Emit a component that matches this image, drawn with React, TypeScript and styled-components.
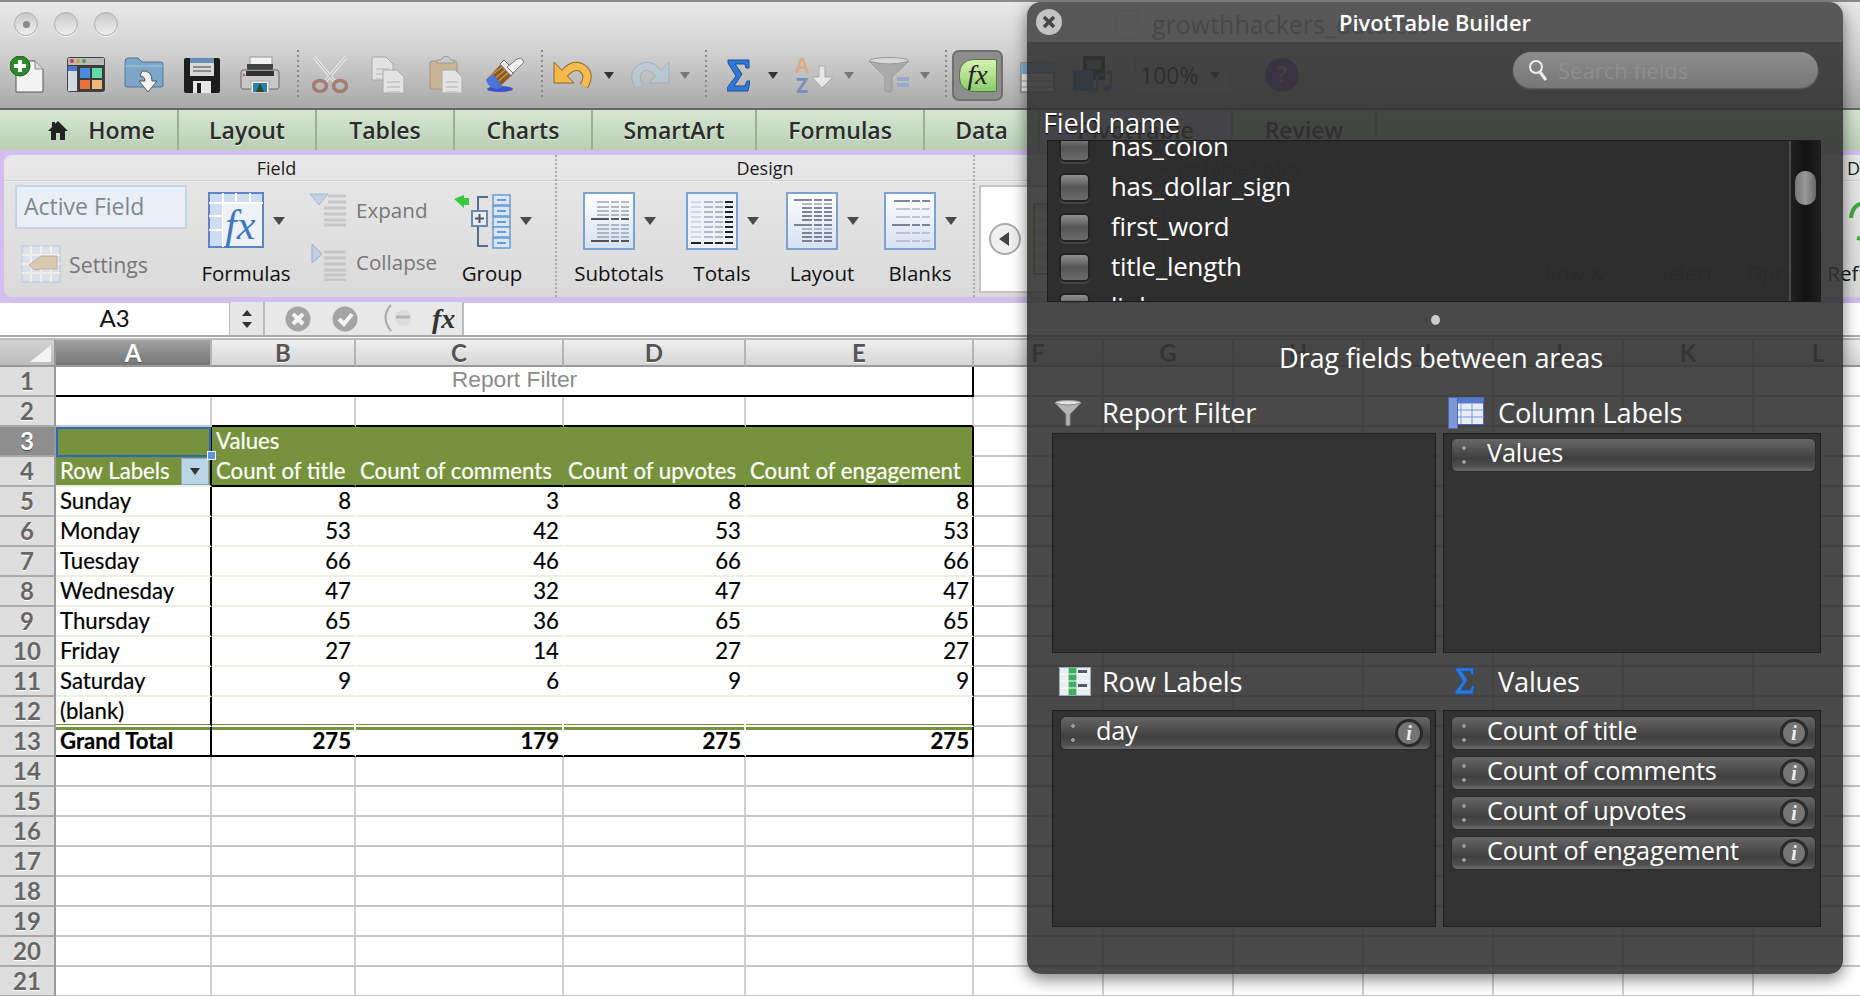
import React from 'react';
import styled, { createGlobalStyle } from 'styled-components';

const GlobalStyle = createGlobalStyle`
  html, body { margin: 0; padding: 0; background: #fff; }
  * { box-sizing: border-box; }
`;

const UI = '"Open Sans", "Liberation Sans", sans-serif';
const CELL = 'Lato, "Open Sans", sans-serif';
const GREEN = '#76923c';

/* ---------- toolbar icons ---------- */

const NewDocIcon = () => (
  <svg width="34" height="38" viewBox="0 0 34 38">
    <path d="M6 5H25L33 13V36H6Z" fill="#f4f4f4" stroke="#555" strokeWidth="1" />
    <path d="M25 5V13H33" fill="#ddd" stroke="#888" />
    <circle cx="10" cy="10" r="10" fill="#2c8a2c" stroke="#175c17" />
    <path d="M10 4V16M4 10H16" stroke="#fff" strokeWidth="4" />
  </svg>
);

const GalleryIcon = () => (
  <svg width="38" height="36" viewBox="0 0 38 36">
    <rect x="0.5" y="0.5" width="37" height="34" rx="2" fill="#3c3c3c" stroke="#444" />
    <rect x="1" y="1" width="36" height="7" fill="#b9b9b9" />
    <circle cx="5" cy="4" r="2" fill="#d63c30" />
    <circle cx="11" cy="4" r="2" fill="#d89a2c" />
    <circle cx="17" cy="4" r="2" fill="#4c9a3a" />
    <rect x="1" y="9" width="9" height="25" fill="#d5dae2" />
    <rect x="1" y="9" width="9" height="5" fill="#4a78d0" />
    <rect x="13" y="11" width="10" height="10" fill="#4c8ae0" />
    <rect x="25" y="11" width="10" height="10" fill="#5fdca8" />
    <rect x="13" y="23" width="10" height="9" fill="#e8703c" />
    <rect x="25" y="23" width="10" height="9" fill="#f0b878" />
  </svg>
);

const OpenIcon = () => (
  <svg width="40" height="38" viewBox="0 0 40 38">
    <path d="M1 6Q1 2 4 2H14L18 6H37Q39 6 39 9V29Q39 31 37 31H3Q1 31 1 29Z" fill="#7ea6c8" stroke="#4e7698" />
    <path d="M1 10H39" stroke="#a8c6de" />
    <path d="M18 15Q28 14 28 25H33L24 36L15 25H21Q21 20 16 20Z" fill="#f4f4f4" stroke="#555" />
  </svg>
);

const SaveIcon = () => (
  <svg width="36" height="37" viewBox="0 0 36 37">
    <path d="M2 1H34Q36 1 36 3V34Q36 36 34 36H2Q0 36 0 34V3Q0 1 2 1Z" fill="#1d1d1d" />
    <rect x="6" y="1" width="24" height="18" fill="#d8d8d8" />
    <rect x="6" y="1" width="24" height="5" fill="#6c8cb8" />
    <path d="M9 10H27M9 14H27" stroke="#8a8a8a" strokeWidth="2" />
    <rect x="9" y="24" width="18" height="12" fill="#e6e6e6" />
    <rect x="13" y="26" width="4" height="10" fill="#1d1d1d" />
  </svg>
);

const PrintIcon = () => (
  <svg width="40" height="38" viewBox="0 0 40 38">
    <rect x="10" y="1" width="22" height="12" fill="#f2f2f2" stroke="#999" />
    <rect x="7" y="8" width="26" height="10" fill="#444" />
    <path d="M3 14H37Q39 14 39 17V31Q39 33 37 33H3Q1 33 1 31V17Q1 14 3 14Z" fill="#c8c8c8" stroke="#666" />
    <rect x="6" y="15" width="28" height="5" fill="#333" />
    <circle cx="4" cy="19" r="1.2" fill="#d44" />
    <rect x="11" y="25" width="18" height="12" fill="#eee" stroke="#aaa" />
    <rect x="13" y="27" width="14" height="9" fill="#2f7fa8" />
    <path d="M20 27L24 36H16Z" fill="#1d4f2e" />
  </svg>
);

const ScissorsIcon = () => (
  <svg width="36" height="38" viewBox="0 0 36 38" opacity="0.75">
    <path d="M2 1L24 27M34 1L12 27" stroke="#f0f0f0" strokeWidth="3.5" />
    <path d="M2 1L24 27M34 1L12 27" stroke="#a8a8a8" strokeWidth="1" />
    <ellipse cx="8" cy="30" rx="6.5" ry="5.5" fill="none" stroke="#a0675a" strokeWidth="3.5" />
    <ellipse cx="28" cy="30" rx="6.5" ry="5.5" fill="none" stroke="#a0675a" strokeWidth="3.5" />
  </svg>
);

const SheetShape = ({ x, y, w, h }: { x: number; y: number; w: number; h: number }) => (
  <g>
    <path d={`M${x} ${y}H${x + w - 7}L${x + w} ${y + 7}V${y + h}H${x}Z`} fill="#e3e3e3" stroke="#aaa" />
    <path d={`M${x + 4} ${y + 12}H${x + w - 4}M${x + 4} ${y + 17}H${x + w - 4}M${x + 4} ${y + 22}H${x + w - 4}`} stroke="#c4c4c4" strokeWidth="1.5" />
  </g>
);

const CopyIcon = () => (
  <svg width="34" height="38" viewBox="0 0 34 38">
    <SheetShape x={1} y={1} w={21} h={23} />
    <SheetShape x={12} y={14} w={21} h={23} />
  </svg>
);

const PasteIcon = () => (
  <svg width="34" height="38" viewBox="0 0 34 38">
    <rect x="1" y="5" width="27" height="28" rx="2" fill="#c9b596" stroke="#a4947c" />
    <path d="M8 7V4H12Q14 0 17 0T22 4H25V7Z" fill="#c8c8c8" stroke="#999" />
    <SheetShape x={13} y={14} w={20} h={23} />
  </svg>
);

const BrushIcon = () => (
  <svg width="39" height="38" viewBox="0 0 39 38">
    <ellipse cx="15" cy="33" rx="13" ry="3" fill="#3c50c8" />
    <path d="M1 24L15 9L26 20L12 33Z" fill="#8a5a22" />
    <path d="M4 21L17 11M7 25L20 14M10 28L23 17" stroke="#c89448" strokeWidth="1.5" />
    <path d="M1 24L8 18L18 31L12 33Q4 33 1 24Z" fill="#4a74d8" />
    <path d="M15 8L19 4L30 15L26 20Z" fill="#e8e8e8" stroke="#666" />
    <path d="M22 11L32 3Q36 1 38 4T36 9L28 17Z" fill="#f2f2f2" stroke="#777" />
  </svg>
);

const UndoIcon = () => (
  <svg width="40" height="32" viewBox="0 0 40 32">
    <path d="M11 15Q20 4 29 9Q38 15 31 27" fill="none" stroke="#8a6a2c" strokeWidth="9" />
    <path d="M1 3V24H21Z" fill="#f4b848" stroke="#8a6a2c" />
    <path d="M11 15Q20 4 29 9Q38 15 31 27" fill="none" stroke="#f6bc50" strokeWidth="7" />
  </svg>
);

const RedoIcon = () => (
  <svg width="40" height="32" viewBox="0 0 40 32" opacity="0.6">
    <path d="M29 15Q20 4 11 9Q2 15 9 27" fill="none" stroke="#8ea4b2" strokeWidth="9" />
    <path d="M39 3V24H19Z" fill="#b6ccda" stroke="#8ea4b2" />
    <path d="M29 15Q20 4 11 9Q2 15 9 27" fill="none" stroke="#b6ccda" strokeWidth="7" />
  </svg>
);

const Caret = ({ faded }: { faded?: boolean }) => (
  <svg width="10" height="7" viewBox="0 0 10 7">
    <path d="M0 0H10L5 7Z" fill={faded ? '#777' : '#333'} />
  </svg>
);

const BigCaret = () => (
  <svg width="12" height="8" viewBox="0 0 12 8">
    <path d="M0 0H12L6 8Z" fill="#4a4a4a" />
  </svg>
);

const SigmaIcon = ({ size = 1 }: { size?: number }) => (
  <svg width={23 * size} height={33 * size} viewBox="0 0 23 33">
    <path d="M1 1H22V9H19L18 5H8L15 15L7 27H18L20 22H23L21 32H0V29L9 17L1 4Z" fill="#2f78d8" stroke="#1a4f9c" />
  </svg>
);

const SortIcon = () => (
  <svg width="39" height="38" viewBox="0 0 39 38">
    <text x="0" y="17" fontFamily="Open Sans" fontWeight="700" fontSize="21" fill="#d8ac88">A</text>
    <text x="1" y="37" fontFamily="Open Sans" fontWeight="700" fontSize="21" fill="#7890b8">Z</text>
    <path d="M24 10H30V21H38L27 32L17 21H24Z" fill="#e6e6e6" stroke="#aaa" />
  </svg>
);

const FunnelIcon = () => (
  <svg width="27" height="26" viewBox="0 0 27 26">
    <ellipse cx="13" cy="3" rx="13" ry="2.5" fill="#e0e0e0" stroke="#999" />
    <path d="M0 3L11 14V25Q13 26 15 25V14L26 3Q13 7 0 3Z" fill="#b4b4b4" stroke="#888" />
  </svg>
);

const FilterIcon = () => (
  <svg width="41" height="36" viewBox="0 0 41 36">
    <ellipse cx="20" cy="4" rx="20" ry="3.5" fill="#d8d8d8" stroke="#999" />
    <path d="M0 4L16 20V34Q20 36 23 34V20L40 4Q20 10 0 4Z" fill="#aaa" stroke="#999" />
    <path d="M28 22H40M28 28H40" stroke="#98a8cc" strokeWidth="4" />
  </svg>
);

const CalendarIcon = () => (
  <svg width="35" height="36" viewBox="0 0 35 36">
    <rect x="1" y="6" width="33" height="29" fill="#f2f2f2" stroke="#666" />
    <rect x="1" y="6" width="33" height="11" fill="#88b4d8" />
    <path d="M1 24H34M1 30H34" stroke="#999" />
  </svg>
);

const MediaIcon = () => (
  <svg width="40" height="38" viewBox="0 0 40 38">
    <rect x="10" y="0" width="22" height="24" fill="#333" />
    <rect x="14" y="4" width="14" height="9" fill="#789" />
    <rect x="0" y="14" width="20" height="21" fill="#5a7ab0" />
    <path d="M24 35V20L38 16V32" stroke="#5a7ab0" strokeWidth="2.5" fill="none" />
    <ellipse cx="20" cy="34" rx="4" ry="3" fill="#5a7ab0" />
    <ellipse cx="34" cy="32" rx="4" ry="3" fill="#5a7ab0" />
  </svg>
);

const HelpIcon = () => (
  <svg width="36" height="36" viewBox="0 0 36 36">
    <circle cx="18" cy="18" r="17" fill="#6a4ab0" stroke="#aaa" />
    <text x="18" y="26" textAnchor="middle" fontFamily="Open Sans" fontWeight="700" fontSize="23" fill="#b8a8d8">?</text>
  </svg>
);

const HomeIcon = () => (
  <svg width="20" height="19" viewBox="0 0 20 19">
    <path d="M10 0L20 10H17V19H12V12H8V19H3V10H0L4 6V1H7V3Z" fill="#222" />
  </svg>
);

/* ---------- ribbon icons ---------- */

const FormulasIcon = () => (
  <svg width="56" height="58" viewBox="0 0 56 58">
    <rect x="1" y="1" width="54" height="54" fill="#cfdcf2" stroke="#5d84c4" strokeWidth="2" />
    <path d="M1 11H55M15 1V55M28 1V11M42 1V11M1 24H15M1 38H15" stroke="#fff" strokeWidth="2" />
    <rect x="15" y="12" width="39" height="42" fill="#eef1f6" />
    <text x="17" y="47" fontFamily="Liberation Serif" fontStyle="italic" fontSize="42" fill="#3d78c0">fx</text>
  </svg>
);

const ExpandIcon = () => (
  <svg width="36" height="34" viewBox="0 0 36 34">
    <path d="M0 1H18L9 12Z" fill="#c4d0e2" stroke="#a8b8cc" />
    <path d="M18 3H36M18 9H36M14 15H36M14 21H36M14 27H36M14 32H36" stroke="#c6c6c6" strokeWidth="3" />
  </svg>
);

const CollapseIcon = () => (
  <svg width="36" height="38" viewBox="0 0 36 38">
    <path d="M2 1L12 11L2 20Z" fill="#c4d0e2" stroke="#98acc8" />
    <path d="M14 9H36M14 15H36M14 21H36M14 27H36M14 32H36M14 37H36" stroke="#c6c6c6" strokeWidth="3" />
  </svg>
);

const GroupIcon = () => (
  <svg width="58" height="56" viewBox="0 0 58 56">
    <path d="M1 6L11 2V5H16V12H11V15Z" fill="#3cc83c" />
    <path d="M35 4H25V53H35" fill="none" stroke="#556e8e" strokeWidth="2" />
    <rect x="19" y="18" width="15" height="15" fill="#e6ecf4" stroke="#6e88a8" strokeWidth="2" />
    <path d="M26.5 21V30M22 25.5H31" stroke="#555" strokeWidth="2" />
    {[2, 13, 24, 34, 45].map(y => (
      <g key={y}>
        <rect x="40" y={y} width="17" height="10" fill="#d8e6f8" stroke="#6e9ad0" strokeWidth="1.5" />
        <path d={`M44 ${y + 5}H53`} stroke="#6e9ad0" strokeWidth="2" />
      </g>
    ))}
  </svg>
);

const SettingsIcon = () => (
  <svg width="40" height="38" viewBox="0 0 40 38" opacity="0.55">
    <rect x="1" y="1" width="38" height="36" fill="#dce6f2" stroke="#9cb4d0" />
    <path d="M1 10H39M1 19H39M1 28H39M10 1V37M20 1V37M30 1V37" stroke="#fff" strokeWidth="2" />
    <path d="M8 20L20 11H36V24H20L14 25Z" fill="#d8b890" stroke="#a88c68" />
  </svg>
);

type Bar = { y: number; c: string; from: number };

const Thumb = ({ bars, segs }: { bars: Bar[]; segs: [number, number][] }) => (
  <svg width="52" height="59" viewBox="0 0 52 59">
    <defs>
      <linearGradient id="thumbFill" x1="0" y1="0" x2="0" y2="1">
        <stop offset="0" stopColor="#fff" />
        <stop offset="1" stopColor="#d6e0f2" />
      </linearGradient>
    </defs>
    <rect x="1" y="1" width="50" height="56" fill="url(#thumbFill)" stroke="#7ca2d2" strokeWidth="2" />
    {bars.map((b, i) =>
      segs.map(([s, e], j) => (
        <path key={`${i}-${j}`} d={`M${Math.max(s, b.from)} ${b.y}H${e}`} stroke={b.c} strokeWidth="1.6" />
      ))
    )}
  </svg>
);

const G = '#9aa2b0';
const K = '#222';
const D = '#53627a';
const L = '#a8b4c8';

const subtotalBars: Bar[] = [
  { y: 10, c: G, from: 14 }, { y: 15, c: G, from: 14 }, { y: 19, c: G, from: 14 }, { y: 23, c: G, from: 14 },
  { y: 27, c: K, from: 8 }, { y: 33, c: G, from: 14 }, { y: 37, c: G, from: 14 }, { y: 41, c: G, from: 14 },
  { y: 45, c: G, from: 14 }, { y: 49, c: K, from: 8 },
];
const layoutBars: Bar[] = [
  { y: 8, c: D, from: 8 }, { y: 12, c: G, from: 16 }, { y: 16, c: D, from: 16 }, { y: 20, c: D, from: 16 },
  { y: 24, c: D, from: 16 }, { y: 28, c: D, from: 16 }, { y: 33, c: D, from: 8 }, { y: 37, c: G, from: 16 },
  { y: 41, c: D, from: 16 }, { y: 45, c: D, from: 16 }, { y: 49, c: D, from: 16 },
];
const blankBars: Bar[] = [
  { y: 9, c: D, from: 10 }, { y: 17, c: L, from: 12 }, { y: 25, c: L, from: 12 },
  { y: 33, c: D, from: 8 }, { y: 41, c: L, from: 12 }, { y: 49, c: L, from: 12 },
];

const TotalsThumb = () => (
  <svg width="52" height="59" viewBox="0 0 52 59">
    <rect x="1" y="1" width="50" height="56" fill="#eef2fa" stroke="#7ca2d2" strokeWidth="2" />
    {[10, 15, 20, 25, 30, 35, 40, 45].map(y => (
      <g key={y}>
        <path d={`M5 ${y}H15`} stroke="#c4cee0" strokeWidth="1.6" />
        <path d={`M18 ${y}H27M29 ${y}H37`} stroke={G} strokeWidth="1.6" />
        <path d={`M39 ${y}H47`} stroke={K} strokeWidth="1.8" />
      </g>
    ))}
    <path d="M5 51H15M18 51H27M29 51H37M39 51H47" stroke={K} strokeWidth="1.8" />
  </svg>
);

/* ---------- toolbar ---------- */

const Page = styled.div`
  position: relative;
  width: 1860px;
  height: 996px;
  overflow: hidden;
  background: #fff;
`;

const WindowTop = styled.div`
  height: 110px;
  border-top: 2px solid #8a8a8a;
  border-bottom: 2px solid #666;
  background: linear-gradient(#e9e9e9, #d2d2d2 45%, #a9a9a9);
`;

const TitleRow = styled.div`
  display: flex;
  align-items: center;
  height: 44px;
  padding-left: 14px;
  gap: 16px;
`;

const Light = styled.span`
  display: flex;
  align-items: center;
  justify-content: center;
  width: 24px;
  height: 24px;
  border-radius: 50%;
  border: 1px solid #aaa;
  background: linear-gradient(#c8c8c8, #f0f0f0);
  box-shadow: 0 1px 0 #f4f4f4;
`;

const LightDot = styled.span`
  width: 7px;
  height: 7px;
  border-radius: 50%;
  background: #888;
`;

const DocGlyph = styled.span`
  width: 22px;
  height: 28px;
  margin-left: 982px;
  background: #e4e4e4;
  border: 1px solid #bbb;
`;

const DocTitle = styled.span`
  font: 25px ${UI};
  color: #4a4a4a;
  margin-left: -2px;
`;

const ToolRow = styled.div`
  display: flex;
  align-items: center;
  height: 62px;
  padding-bottom: 4px;
`;

const Tool = styled.span<{ $ml: number }>`
  display: flex;
  align-items: center;
  margin-left: ${p => p.$ml}px;
  flex: none;
`;

const ToolSep = styled.span`
  width: 2px;
  height: 50px;
  background-image: linear-gradient(#888 50%, transparent 50%);
  background-size: 2px 5px;
`;

const FxToggle = styled.span`
  display: flex;
  align-items: center;
  justify-content: center;
  width: 51px;
  height: 51px;
  border-radius: 7px;
  border: 2px solid #6f6f6f;
  background: #8d8d8d;
`;

const FxLeaf = styled.span`
  width: 38px;
  height: 33px;
  border-radius: 14px 2px 2px 14px;
  border: 1px solid #4c7a3a;
  background: linear-gradient(#d8f0b0, #8ccc6c);
  font: italic 28px/29px "Liberation Serif", serif;
  color: #222;
  text-align: center;
`;

const ZoomCombo = styled.span`
  display: flex;
  width: 96px;
  height: 36px;
  align-items: center;
  justify-content: space-between;
  border: 1px solid #aaa;
  background: #c4c4c4;
  font: 23px ${UI};
  color: #222;
  padding: 0 10px 0 4px;
`;

/* ---------- tabs ---------- */

const TabRow = styled.div`
  display: flex;
  height: 40px;
  background: linear-gradient(#d6e6d2, #b8d0b4);
`;

const Tab = styled.div<{ $w: number; $active?: boolean; $pl?: number }>`
  display: flex;
  align-items: center;
  justify-content: center;
  gap: 20px;
  flex: none;
  width: ${p => p.$w}px;
  padding-left: ${p => p.$pl ?? 0}px;
  border-right: 2px solid #98b096;
  font: 600 23px ${UI};
  color: #2b2b2b;
  text-shadow: 0 1px 0 #e8f2e4;
  background: ${p => (p.$active ? '#d6c8ea' : 'transparent')};
`;

/* ---------- ribbon ---------- */

const Ribbon = styled.div`
  height: 153px;
  background: #d2bfee;
  padding: 5px 0 6px 4px;
`;

const RibbonInner = styled.div`
  display: flex;
  height: 100%;
  border-radius: 8px 0 0 8px;
  background: linear-gradient(#e8e8e8, #dadada);
  overflow: hidden;
`;

const Group = styled.div<{ $w: number; $sep?: boolean }>`
  flex: none;
  display: flex;
  flex-direction: column;
  width: ${p => p.$w}px;
  border-right: ${p => (p.$sep ? '2px dotted #aaa' : 'none')};
`;

const GroupTitle = styled.div<{ $left?: boolean; $shift?: number }>`
  height: 26px;
  font: 18px/27px ${UI};
  color: #1c1c1c;
  text-align: ${p => (p.$left ? 'left' : 'center')};
  padding-left: ${p => (p.$left ? '13px' : '0')};
  padding-right: ${p => p.$shift ?? 0}px;
  border-bottom: 1px solid #cfcfcf;
  box-shadow: 0 1px 0 #eee;
`;

const GroupBody = styled.div`
  flex: 1;
  display: flex;
  position: relative;
`;

const FieldCol = styled.div`
  flex: none;
  display: flex;
  flex-direction: column;
  width: 196px;
  padding: 4px 0 0 11px;
`;

const ActiveField = styled.div`
  width: 172px;
  height: 44px;
  padding-left: 7px;
  border: 2px solid #c6d4e6;
  background: #e8eff6;
  font: 23px/38px ${UI};
  color: #7f8890;
`;

const SettingsRow = styled.div`
  display: flex;
  align-items: center;
  gap: 8px;
  margin: 16px 0 0 6px;
  font: 21.3px ${UI};
  color: #777;
`;

const BigButton = styled.div<{ $w: number; $ml?: number }>`
  flex: none;
  display: flex;
  flex-direction: column;
  align-items: center;
  width: ${p => p.$w}px;
  margin-left: ${p => p.$ml ?? 0}px;
  padding-top: 10px;
`;

const BigIconRow = styled.div`
  display: flex;
  align-items: center;
  gap: 9px;
  height: 60px;
`;

const BigLabel = styled.div`
  margin-top: 10px;
  font: 20.5px/24px ${UI};
  color: #111;
  text-align: center;
  white-space: nowrap;
`;

const StackCol = styled.div`
  flex: none;
  display: flex;
  flex-direction: column;
  gap: 16px;
  width: 148px;
  margin-left: 18px;
  padding-top: 11px;
`;

const StackRow = styled.div`
  display: flex;
  align-items: center;
  gap: 10px;
  height: 36px;
  font: 20.6px ${UI};
  color: #777;
`;

const StylesPane = styled.div`
  flex: none;
  display: flex;
  align-items: center;
  gap: 12px;
  width: 490px;
  height: 108px;
  margin: 4px 0 0 4px;
  padding-left: 8px;
  border: 2px solid #c4c4c4;
  background: #fff;
`;

const RoundArrow = styled.span`
  flex: none;
  display: flex;
  align-items: center;
  justify-content: center;
  width: 32px;
  height: 32px;
  border-radius: 50%;
  border: 2px solid #aaa;
  background: #f0f0f0;
`;

const StyleThumb = styled.span`
  flex: none;
  width: 60px;
  height: 72px;
  border: 2px solid #8bb06a;
  background: repeating-linear-gradient(#dfe8d0 0 6px, #fff 6px 12px);
`;

const RefreshGlyph = styled.svg`
  display: block;
`;

/* ---------- formula bar ---------- */

const FormulaBar = styled.div`
  display: flex;
  height: 35px;
  border-bottom: 2px solid #aaa;
  margin-top: -1px;
`;

const NameBox = styled.div`
  width: 229px;
  text-align: center;
  font: 24px/32px ${CELL};
  color: #111;
`;

const Stepper = styled.div`
  display: flex;
  align-items: center;
  justify-content: center;
  width: 36px;
  background: #e6e6e6;
  border-left: 1px solid #bbb;
  border-right: 2px solid #bbb;
`;

const FormulaTools = styled.div`
  display: flex;
  align-items: center;
  gap: 21px;
  width: 199px;
  padding-left: 20px;
  background: #e8e8e8;
  border-right: 2px solid #bbb;
`;

const RoundTool = styled.span`
  flex: none;
  display: flex;
`;

const FxGhost = styled.span`
  font: italic bold 28px/30px "Liberation Serif", serif;
  color: #333;
  margin-left: -12px;
`;

/* ---------- sheet ---------- */

const Sheet = styled.div`
  display: grid;
  grid-template-columns: 56px 156px 144px 208px 182px 228px repeat(7, 130px);
  grid-auto-rows: 30px;
  grid-template-rows: 27px;
  margin-top: 1px;
  border-top: 2px solid #bcbcbc;
  width: 1884px;
`;

const ColHead = styled.div<{ $on?: boolean }>`
  display: flex;
  align-items: center;
  justify-content: center;
  border-right: 2px solid #b4b4b4;
  border-bottom: 2px solid #999;
  background: ${p => (p.$on ? 'linear-gradient(#a0a0a0, #767676)' : 'linear-gradient(#efefef, #d6d6d6)')};
  font: 700 24px/24px ${CELL};
  color: ${p => (p.$on ? '#fff' : '#555')};
  text-shadow: ${p => (p.$on ? '0 1px 0 #555' : '0 1px 0 #fff')};
`;

const Corner = styled.div`
  border-right: 2px solid #999;
  border-bottom: 2px solid #999;
  background: linear-gradient(#d2d2d2, #bcbcbc);
  padding: 5px 3px 3px 30px;
`;

const CornerTri = styled.div`
  width: 100%;
  height: 100%;
  background: #f4f4f4;
  clip-path: polygon(100% 0, 100% 100%, 0 100%);
`;

const RowHead = styled.div<{ $on?: boolean }>`
  display: flex;
  align-items: center;
  justify-content: center;
  border-right: 2px solid #999;
  border-bottom: 2px solid #a8a8a8;
  background: ${p => (p.$on ? '#8e8e8e' : '#dedede')};
  font: 700 24px/24px ${CELL};
  color: ${p => (p.$on ? '#fff' : '#666')};
  text-shadow: ${p => (p.$on ? '0 1px 0 #444' : '0 1px 0 #fff')};
`;

const Cell = styled.div<{
  $right?: string;
  $bottom?: string;
  $bg?: string;
  $num?: boolean;
  $bold?: boolean;
  $light?: boolean;
  $span?: number;
  $shadow?: string;
}>`
  position: relative;
  display: flex;
  align-items: center;
  justify-content: ${p => (p.$num ? 'flex-end' : 'flex-start')};
  grid-column: span ${p => p.$span ?? 1};
  padding: 0 3px 0 4px;
  border-right: 2px solid ${p => p.$right ?? '#cfcfcf'};
  border-bottom: 2px solid ${p => p.$bottom ?? '#c6c6c6'};
  background: ${p => p.$bg ?? '#fff'};
  box-shadow: ${p => p.$shadow ?? 'none'};
  font: ${p => (p.$bold ? 700 : 400)} 22.2px/26px ${CELL};
  color: ${p => (p.$light ? '#fff' : '#000')};
  -webkit-text-stroke: 0.2px currentColor;
  white-space: nowrap;
`;

const ReportFilterText = styled.div`
  width: 100%;
  text-align: center;
  font: 22.8px/22px "Liberation Sans", Arial, sans-serif;
  color: #8c8c8c;
  margin-top: -4px;
  -webkit-text-stroke: 0;
`;

const Selection = styled.div`
  position: absolute;
  inset: 0 -1px -2px 0;
  border: 2px solid #2b68c0;
  pointer-events: none;
`;

const Handle = styled.div`
  position: absolute;
  right: -6px;
  bottom: -5px;
  width: 9px;
  height: 9px;
  background: #5c94e0;
  border: 1px solid #fff;
  z-index: 2;
`;

const FilterDrop = styled.div`
  position: absolute;
  right: 1px;
  top: 1px;
  bottom: 0;
  width: 28px;
  display: flex;
  align-items: center;
  justify-content: center;
  background: #b9d5e6;
  border: 1px solid #8eaabb;
`;

/* ---------- pivot panel ---------- */

const Panel = styled.div`
  position: absolute;
  top: 2px;
  left: 1027px;
  width: 816px;
  height: 972px;
  display: flex;
  flex-direction: column;
  border-radius: 14px;
  background: rgba(48, 48, 48, 0.88);
  box-shadow: 0 5px 16px rgba(0, 0, 0, 0.5);
  color: #fff;
`;

const PanelTitleBar = styled.div`
  position: relative;
  height: 40px;
  flex: none;
  display: flex;
  align-items: center;
  justify-content: center;
  border-radius: 14px 14px 0 0;
  background: rgba(255, 255, 255, 0.1);
  font: 600 21.8px ${UI};
`;

const CloseBtn = styled.span`
  position: absolute;
  left: 9px;
  top: 7px;
  width: 26px;
  height: 26px;
  border-radius: 50%;
  background: #c4c4c4;
  display: flex;
  align-items: center;
  justify-content: center;
`;

const SearchRow = styled.div`
  flex: none;
  display: flex;
  justify-content: flex-end;
  height: 68px;
  padding: 10px 25px 0 0;
`;

const SearchBox = styled.div`
  display: flex;
  align-items: center;
  gap: 10px;
  width: 305px;
  height: 36px;
  padding-left: 15px;
  border-radius: 18px;
  background: linear-gradient(#8c8c8c, #777);
  box-shadow: 0 1px 2px rgba(255, 255, 255, 0.2);
  font: 22px ${UI};
  color: #8e8e8e;
`;

const FieldHead = styled.div`
  flex: none;
  height: 30px;
  padding-left: 16px;
  font: 500 27.2px/26px ${UI};
  letter-spacing: -0.2px;
  text-shadow: 0 1px 1px #000;
`;

const FieldList = styled.div`
  flex: none;
  display: flex;
  width: 774px;
  height: 162px;
  margin-left: 20px;
  border: 1px solid #1c1c1c;
  background: rgba(42, 42, 42, 0.85);
  overflow: hidden;
`;

const FieldRows = styled.div`
  flex: 1;
  margin-top: -15px;
`;

const FieldRow = styled.div`
  display: flex;
  align-items: center;
  gap: 23px;
  height: 40px;
  padding-left: 13px;
  font: 500 25.8px ${UI};
  letter-spacing: -0.2px;
`;

const Check = styled.span`
  flex: none;
  width: 27px;
  height: 25px;
  margin-top: 3px;
  border-radius: 4px;
  background: linear-gradient(#8f8f8f, #555 50%, #6c6c6c);
  box-shadow: 0 0 0 2px #232323, 0 2px 0 2px #444;
`;

const ScrollTrack = styled.div`
  flex: none;
  width: 31px;
  padding-top: 30px;
  display: flex;
  justify-content: center;
  border-left: 2px solid #4a4a4a;
  background: linear-gradient(90deg, #202020, #111, #202020);
`;

const ScrollThumb = styled.span`
  width: 21px;
  height: 34px;
  border-radius: 10px;
  background: linear-gradient(90deg, #777, #999, #666);
`;

const Grip = styled.div`
  flex: none;
  height: 36px;
  display: flex;
  align-items: center;
  justify-content: center;
`;

const GripDot = styled.span`
  width: 9px;
  height: 10px;
  border-radius: 50%;
  background: #ccc;
`;

const DragHead = styled.div`
  flex: none;
  height: 40px;
  padding-left: 12px;
  text-align: center;
  font: 500 27.2px/40px ${UI};
  letter-spacing: -0.2px;
`;

const Areas = styled.div`
  flex: none;
  display: grid;
  grid-template-columns: 384px 378px;
  grid-template-rows: 261px 274px;
  column-gap: 7px;
  margin: 14px 0 0 25px;
`;

const Area = styled.div`
  display: flex;
  flex-direction: column;
`;

const AreaHead = styled.div<{ $up?: number }>`
  flex: 1;
  display: flex;
  align-items: center;
  padding-bottom: ${p => p.$up ?? 0}px;
  font: 500 27.2px ${UI};
  letter-spacing: -0.2px;
`;

const AreaIcon = styled.span<{ $w: number; $ml: number }>`
  flex: none;
  display: flex;
  width: ${p => p.$w}px;
  padding-left: ${p => p.$ml}px;
`;

const AreaBox = styled.div<{ $h: number; $top: number }>`
  flex: none;
  display: flex;
  flex-direction: column;
  gap: 6px;
  height: ${p => p.$h}px;
  padding: ${p => p.$top}px 4px 0 7px;
  border: 1px solid #1f1f1f;
  background: rgba(45, 45, 45, 0.8);
`;

const Pill = styled.div`
  flex: none;
  display: flex;
  align-items: center;
  height: 34px;
  padding: 0 7px 0 10px;
  border: 1px solid #2a2a2a;
  border-radius: 6px;
  background: linear-gradient(#676767, #4a4a4a 45%, #3f3f3f 60%, #4e4e4e 85%, #6a6a6a);
  font: 500 25.3px/28px ${UI};
  letter-spacing: -0.2px;
  white-space: nowrap;
`;

const PillGrip = styled.span`
  flex: none;
  width: 4px;
  height: 22px;
  margin: 3px 21px 0 0;
  background-image: radial-gradient(circle at 2px 2px, #999 1.6px, transparent 2px);
  background-size: 4px 14px;
`;

const PillName = styled.span`
  flex: 1;
  margin-top: -6px;
`;

const InfoBtn = styled.span`
  flex: none;
  width: 28px;
  height: 28px;
  border-radius: 50%;
  border: 3px solid #2a2a2a;
  background: #747474;
  font: italic 700 20px/22px "Liberation Serif", serif;
  text-align: center;
  color: #eee;
`;

/* ---------- data ---------- */

const ROWS: Record<number, (string | number)[]> = {
  5: ['Sunday', 8, 3, 8, 8],
  6: ['Monday', 53, 42, 53, 53],
  7: ['Tuesday', 66, 46, 66, 66],
  8: ['Wednesday', 47, 32, 47, 47],
  9: ['Thursday', 65, 36, 65, 65],
  10: ['Friday', 27, 14, 27, 27],
  11: ['Saturday', 9, 6, 9, 9],
  12: ['(blank)', '', '', '', ''],
  13: ['Grand Total', 275, 179, 275, 275],
};

const HEADERS = ['Count of title', 'Count of comments', 'Count of upvotes', 'Count of engagement'];
const EXTRA_COLS = ['F', 'G', 'H', 'I', 'J', 'K', 'L'];
const ROW_LINE = '#ebf1de';

const Filler = () => (
  <>
    {EXTRA_COLS.map(c => (
      <Cell key={c} />
    ))}
  </>
);

const PivotRow = ({ n }: { n: number }) => {
  if (n === 1) {
    return (
      <>
        <Cell $span={5} $right="#000" $bottom="#000">
          <ReportFilterText>Report Filter</ReportFilterText>
        </Cell>
        <Filler />
      </>
    );
  }
  if (n === 2) {
    return (
      <>
        <Cell $bottom="#c6c6c6" />
        {[0, 1, 2, 3].map(i => (
          <Cell key={i} $bottom="#000" />
        ))}
        <Filler />
      </>
    );
  }
  if (n === 3) {
    return (
      <>
        <Cell $bg={GREEN} $right="#000" $bottom="#000">
          <Selection />
          <Handle />
        </Cell>
        <Cell $bg={GREEN} $right={GREEN} $bottom={GREEN} $light>Values</Cell>
        <Cell $bg={GREEN} $right={GREEN} $bottom={GREEN} />
        <Cell $bg={GREEN} $right={GREEN} $bottom={GREEN} />
        <Cell $bg={GREEN} $right="#000" $bottom={GREEN} />
        <Filler />
      </>
    );
  }
  if (n === 4) {
    return (
      <>
        <Cell $bg={GREEN} $right="#000" $bottom={ROW_LINE} $light>
          Row Labels
          <FilterDrop><Caret /></FilterDrop>
        </Cell>
        {HEADERS.map((h, i) => (
          <Cell key={h} $bg={GREEN} $right={i === 3 ? '#000' : GREEN} $bottom="#000" $light>{h}</Cell>
        ))}
        <Filler />
      </>
    );
  }
  const data = ROWS[n];
  if (data) {
    const last = n === 13;
    const blank = n === 12;
    const bottom = last ? '#000' : blank ? '#fff' : ROW_LINE;
    const shadow = blank ? `inset 0 -1px 0 ${GREEN}, 0 1px 0 ${GREEN}` : last ? `inset 0 3px 0 ${GREEN}` : undefined;
    return (
      <>
        <Cell $right="#000" $bottom={bottom} $bold={last} $shadow={shadow}>{data[0]}</Cell>
        {data.slice(1).map((v, i) => (
          <Cell key={i} $num $right={i === 3 ? '#000' : '#fff'} $bottom={bottom} $bold={last} $shadow={shadow}>{v}</Cell>
        ))}
        <Filler />
      </>
    );
  }
  return (
    <>
      {[0, 1, 2, 3, 4].map(i => (
        <Cell key={i} />
      ))}
      <Filler />
    </>
  );
};

const tools: { ml: number; el: React.ReactNode }[] = [
  { ml: 10, el: <NewDocIcon /> },
  { ml: 23, el: <GalleryIcon /> },
  { ml: 19, el: <OpenIcon /> },
  { ml: 20, el: <SaveIcon /> },
  { ml: 20, el: <PrintIcon /> },
  { ml: 17, el: <ToolSep /> },
  { ml: 13, el: <ScissorsIcon /> },
  { ml: 23, el: <CopyIcon /> },
  { ml: 24, el: <PasteIcon /> },
  { ml: 22, el: <BrushIcon /> },
  { ml: 17, el: <ToolSep /> },
  { ml: 10, el: <UndoIcon /> },
  { ml: 11, el: <Caret /> },
  { ml: 16, el: <RedoIcon /> },
  { ml: 10, el: <Caret faded /> },
  { ml: 15, el: <ToolSep /> },
  { ml: 20, el: <SigmaIcon /> },
  { ml: 18, el: <Caret /> },
  { ml: 17, el: <SortIcon /> },
  { ml: 10, el: <Caret faded /> },
  { ml: 15, el: <FilterIcon /> },
  { ml: 10, el: <Caret faded /> },
  { ml: 15, el: <ToolSep /> },
  { ml: 5, el: <FxToggle><FxLeaf>fx</FxLeaf></FxToggle> },
  { ml: 17, el: <CalendarIcon /> },
  { ml: 18, el: <MediaIcon /> },
  { ml: 22, el: <ZoomCombo>100%<Caret /></ZoomCombo> },
  { ml: 33, el: <HelpIcon /> },
];

const tabs = [
  { label: 'Layout', w: 138 },
  { label: 'Tables', w: 138 },
  { label: 'Charts', w: 138 },
  { label: 'SmartArt', w: 164 },
  { label: 'Formulas', w: 168 },
  { label: 'Data', w: 115 },
];

const fields = ['has_colon', 'has_dollar_sign', 'first_word', 'title_length', 'link'];
const valuePills = ['Count of title', 'Count of comments', 'Count of upvotes', 'Count of engagement'];

const segs3: [number, number][] = [[8, 26], [28, 36], [38, 46]];

const FieldPill = ({ name, info = true }: { name: string; info?: boolean }) => (
  <Pill>
    <PillGrip />
    <PillName>{name}</PillName>
    {info && <InfoBtn>i</InfoBtn>}
  </Pill>
);

const ColumnLabelsIcon = () => (
  <svg width="36" height="32" viewBox="0 0 36 32">
    <rect x="0.5" y="0.5" width="35" height="27" fill="#e8eef8" stroke="#4a68b8" />
    <rect x="0.5" y="0.5" width="35" height="6" fill="#5a78c8" />
    <rect x="0.5" y="0.5" width="9" height="31" fill="#7c96d8" stroke="#4a68b8" />
    <path d="M13 7V27M24 7V27M10 13H36M10 20H36" stroke="#7c96d8" />
  </svg>
);

const RowLabelsIcon = () => (
  <svg width="32" height="29" viewBox="0 0 32 29">
    <rect x="0.5" y="0.5" width="31" height="28" fill="#e8eef0" stroke="#9ab" />
    <rect x="9" y="1" width="9" height="27" fill="#3fae64" />
    <path d="M1 7H31M1 14H31M1 21H31M9 1V28M18 1V28" stroke="#fff" />
    <rect x="19" y="3" width="9" height="3" fill="#557" />
    <rect x="19" y="17" width="9" height="3" fill="#557" />
  </svg>
);

export default function App() {
  return (
    <Page>
      <GlobalStyle />
      <WindowTop>
        <TitleRow>
          <Light><LightDot /></Light>
          <Light />
          <Light />
          <DocGlyph />
          <DocTitle>growthhackers_data.csv</DocTitle>
        </TitleRow>
        <ToolRow>
          {tools.map((t, i) => (
            <Tool key={i} $ml={t.ml}>{t.el}</Tool>
          ))}
        </ToolRow>
      </WindowTop>

      <TabRow>
        <Tab $w={179} $pl={26}><HomeIcon />Home</Tab>
        {tabs.map(t => (
          <Tab key={t.label} $w={t.w}>{t.label}</Tab>
        ))}
        <Tab $w={193} $active>PivotTable</Tab>
        <Tab $w={144}>Review</Tab>
      </TabRow>

      <Ribbon>
        <RibbonInner>
          <Group $w={553} $sep>
            <GroupTitle $shift={6}>Field</GroupTitle>
            <GroupBody>
              <FieldCol>
                <ActiveField>Active Field</ActiveField>
                <SettingsRow><SettingsIcon />Settings</SettingsRow>
              </FieldCol>
              <BigButton $w={92}>
                <BigIconRow><FormulasIcon /><BigCaret /></BigIconRow>
                <BigLabel>Formulas</BigLabel>
              </BigButton>
              <StackCol>
                <StackRow><ExpandIcon />Expand</StackRow>
                <StackRow><CollapseIcon />Collapse</StackRow>
              </StackCol>
              <BigButton $w={84} $ml={-8}>
                <BigIconRow><GroupIcon /><BigCaret /></BigIconRow>
                <BigLabel>Group</BigLabel>
              </BigButton>
            </GroupBody>
          </Group>

          <Group $w={418} $sep>
            <GroupTitle>Design</GroupTitle>
            <GroupBody>
              <BigButton $w={104} $ml={10}>
                <BigIconRow><Thumb bars={subtotalBars} segs={segs3} /><BigCaret /></BigIconRow>
                <BigLabel>Subtotals</BigLabel>
              </BigButton>
              <BigButton $w={102}>
                <BigIconRow><TotalsThumb /><BigCaret /></BigIconRow>
                <BigLabel>Totals</BigLabel>
              </BigButton>
              <BigButton $w={98}>
                <BigIconRow><Thumb bars={layoutBars} segs={segs3} /><BigCaret /></BigIconRow>
                <BigLabel>Layout</BigLabel>
              </BigButton>
              <BigButton $w={98}>
                <BigIconRow><Thumb bars={blankBars} segs={segs3} /><BigCaret /></BigIconRow>
                <BigLabel>Blanks</BigLabel>
              </BigButton>
            </GroupBody>
          </Group>

          <Group $w={510}>
            <GroupTitle>PivotTable Styles</GroupTitle>
            <GroupBody>
              <StylesPane>
                <RoundArrow>
                  <svg width="12" height="14" viewBox="0 0 12 14"><path d="M10 0V14L0 7Z" fill="#444" /></svg>
                </RoundArrow>
                <StyleThumb />
                <StyleThumb />
              </StylesPane>
            </GroupBody>
          </Group>

          <Group $w={349}>
            <GroupTitle />
            <GroupBody>
              <BigButton $w={120} $ml={30}>
                <BigIconRow />
                <BigLabel>Row &amp;</BigLabel>
              </BigButton>
              <BigButton $w={100}>
                <BigIconRow />
                <BigLabel>Select</BigLabel>
              </BigButton>
              <BigButton $w={99}>
                <BigIconRow />
                <BigLabel>Options</BigLabel>
              </BigButton>
            </GroupBody>
          </Group>

          <Group $w={60}>
            <GroupTitle $left>Data</GroupTitle>
            <GroupBody>
              <BigButton $w={60}>
                <BigIconRow>
                  <RefreshGlyph width="30" height="50" viewBox="0 0 30 50">
                    <path d="M2 22Q4 4 22 8M28 28Q26 46 8 42" fill="none" stroke="#3da83d" strokeWidth="4" />
                  </RefreshGlyph>
                </BigIconRow>
                <BigLabel>Refresh</BigLabel>
              </BigButton>
            </GroupBody>
          </Group>
        </RibbonInner>
      </Ribbon>

      <FormulaBar>
        <NameBox>A3</NameBox>
        <Stepper>
          <svg width="12" height="24" viewBox="0 0 12 24">
            <path d="M6 3L11 9H1ZM6 21L11 15H1Z" fill="#333" />
          </svg>
        </Stepper>
        <FormulaTools>
          <RoundTool>
            <svg width="26" height="26" viewBox="0 0 26 26">
              <circle cx="13" cy="13" r="12.5" fill="#a4a4a4" />
              <path d="M8 8L18 18M18 8L8 18" stroke="#f4f4f4" strokeWidth="4" />
            </svg>
          </RoundTool>
          <RoundTool>
            <svg width="26" height="26" viewBox="0 0 26 26">
              <circle cx="13" cy="13" r="12.5" fill="#a4a4a4" />
              <path d="M7 13L12 18L20 8" stroke="#f4f4f4" strokeWidth="4" fill="none" />
            </svg>
          </RoundTool>
          <RoundTool>
            <svg width="44" height="30" viewBox="0 0 44 30">
              <path d="M12 1Q1 13 12 27" stroke="#aaa" strokeWidth="2" fill="none" />
              <circle cx="24" cy="14" r="8" fill="#ddd" />
              <path d="M17 13H31" stroke="#b4b4b4" strokeWidth="3" />
            </svg>
          </RoundTool>
          <FxGhost>fx</FxGhost>
        </FormulaTools>
      </FormulaBar>

      <Sheet>
        <Corner><CornerTri /></Corner>
        {['A', 'B', 'C', 'D', 'E', ...EXTRA_COLS].map(c => (
          <ColHead key={c} $on={c === 'A'}>{c}</ColHead>
        ))}
        {Array.from({ length: 21 }, (_, i) => i + 1).map(n => (
          <React.Fragment key={n}>
            <RowHead $on={n === 3}>{n}</RowHead>
            <PivotRow n={n} />
          </React.Fragment>
        ))}
      </Sheet>

      <Panel>
        <PanelTitleBar>
          <CloseBtn>
            <svg width="14" height="14" viewBox="0 0 14 14">
              <path d="M2 2L12 12M12 2L2 12" stroke="#444" strokeWidth="3.5" />
            </svg>
          </CloseBtn>
          PivotTable Builder
        </PanelTitleBar>
        <SearchRow>
          <SearchBox>
            <svg width="20" height="24" viewBox="0 0 20 24">
              <circle cx="8" cy="9" r="6" fill="none" stroke="#eee" strokeWidth="2" />
              <path d="M12 14L18 22" stroke="#eee" strokeWidth="3" />
            </svg>
            Search fields
          </SearchBox>
        </SearchRow>
        <FieldHead>Field name</FieldHead>
        <FieldList>
          <FieldRows>
            {fields.map(f => (
              <FieldRow key={f}><Check />{f}</FieldRow>
            ))}
          </FieldRows>
          <ScrollTrack><ScrollThumb /></ScrollTrack>
        </FieldList>
        <Grip><GripDot /></Grip>
        <DragHead>Drag fields between areas</DragHead>
        <Areas>
          <Area>
            <AreaHead>
              <AreaIcon $w={50} $ml={3}><FunnelIcon /></AreaIcon>
              Report Filter
            </AreaHead>
            <AreaBox $h={220} $top={4} />
          </Area>
          <Area>
            <AreaHead>
              <AreaIcon $w={55} $ml={5}><ColumnLabelsIcon /></AreaIcon>
              Column Labels
            </AreaHead>
            <AreaBox $h={220} $top={4}>
              <FieldPill name="Values" info={false} />
            </AreaBox>
          </Area>
          <Area>
            <AreaHead>
              <AreaIcon $w={50} $ml={7}><RowLabelsIcon /></AreaIcon>
              Row Labels
            </AreaHead>
            <AreaBox $h={217} $top={5}>
              <FieldPill name="day" />
            </AreaBox>
          </Area>
          <Area>
            <AreaHead>
              <AreaIcon $w={55} $ml={12}><SigmaIcon size={0.85} /></AreaIcon>
              Values
            </AreaHead>
            <AreaBox $h={217} $top={5}>
              {valuePills.map(v => (
                <FieldPill key={v} name={v} />
              ))}
            </AreaBox>
          </Area>
        </Areas>
      </Panel>
    </Page>
  );
}
